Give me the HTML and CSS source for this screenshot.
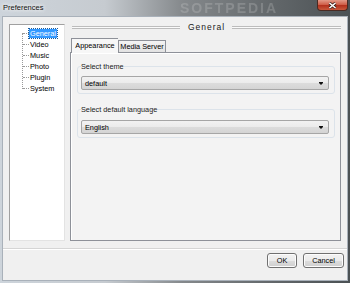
FILE: index.html
```html
<!DOCTYPE html>
<html lang="en">
<head>
    <meta charset="UTF-8">
    <title>Preferences</title>
    <link rel="stylesheet" href="styles.css">
</head>
<body>
    <div class="window">
        <div class="titlebar">
            <span class="title">Preferences</span>
            <span class="watermark">SOFTPEDIA</span>
            <span class="close">
                <svg width="9" height="7" viewBox="0 0 9 7">
                    <path d="M1.5 1 L7.5 6 M7.5 1 L1.5 6" stroke="#3a2018" stroke-width="3" />
                    <path d="M1.5 1 L7.5 6 M7.5 1 L1.5 6" stroke="#fff" stroke-width="1.6" />
                </svg>
            </span>
        </div>
        <div class="client">
            <div class="main">
                <div class="tree">
                    <ul>
                        <li><span class="selected">General</span></li>
                        <li><span>Video</span></li>
                        <li><span>Music</span></li>
                        <li><span>Photo</span></li>
                        <li><span>Plugin</span></li>
                        <li><span>System</span></li>
                    </ul>
                </div>
                <div class="content">
                    <div class="page-header">
                        <span class="rule rule-left"></span>
                        <span class="page-title">General</span>
                        <span class="rule"></span>
                    </div>
                    <div class="tabs">
                        <div class="tab-strip">
                            <span class="tab active">Appearance</span>
                            <span class="tab">Media Server</span>
                        </div>
                        <div class="tab-panel">
                            <fieldset class="group">
                                <legend>Select theme</legend>
                                <div class="combo">
                                    <span>default</span>
                                    <i class="arrow"></i>
                                </div>
                            </fieldset>
                            <fieldset class="group group-lang">
                                <legend>Select default language</legend>
                                <div class="combo">
                                    <span>English</span>
                                    <i class="arrow"></i>
                                </div>
                            </fieldset>
                        </div>
                    </div>
                </div>
            </div>
            <div class="footer">
                <button class="btn btn-ok">OK</button>
                <button class="btn btn-cancel">Cancel</button>
            </div>
        </div>
    </div>
</body>
</html>
```

FILE: styles.css
```css
body {
    margin: 0;
    width: 350px;
    height: 283px;
    overflow: hidden;
    font-family: "Liberation Sans", Arial, sans-serif;
    font-size: 7.3px;
    color: #000;
    background: linear-gradient(90deg, #cdd4db 0%, #c6cbd0 30%, #85898c 52%, #62676a 78%, #4b5154 100%);
}

.window {
    display: flex;
    flex-direction: column;
    height: 283px;
}

.titlebar {
    position: relative;
    height: 16px;
    display: flex;
    justify-content: space-between;
    align-items: flex-start;
    padding-left: 3px;
}

.title {
    font-size: 7.5px;
    line-height: 16px;
    color: #111;
    text-shadow: 0 0 4px #fff, 0 0 4px #fff;
}

/* blurred desktop watermark behind the glass */
.watermark {
    position: absolute;
    left: 180px;
    top: 0;
    font-size: 14px;
    line-height: 16px;
    font-weight: bold;
    letter-spacing: 2px;
    color: rgba(225, 225, 225, 0.22);
    filter: blur(0.7px);
}

.close {
    width: 31px;
    height: 11px;
    margin-right: 2px;
    box-sizing: border-box;
    display: flex;
    justify-content: center;
    align-items: center;
    border: 1px solid #4a2a22;
    border-top: none;
    border-radius: 0 0 4px 4px;
    background: linear-gradient(#e39a88 0%, #d0604a 45%, #b4321e 55%, #c8583c 100%);
}

.client {
    flex: 1;
    margin: 0 2px 2px 2px;
    border: 1px solid #a9b1ba;
    background-color: #f0f0f0;
    display: flex;
    flex-direction: column;
}

.main {
    flex: 1;
    display: flex;
    gap: 5px;
    padding: 7px 6px 0 6px;
}

.tree {
    width: 56px;
    box-sizing: border-box;
    background-color: #fff;
    border: 1px solid;
    border-color: #a0a0a0 #e3e3e3 #e3e3e3 #a0a0a0;
}

.tree ul {
    position: relative;
    list-style: none;
    margin: 3px 0 0 0;
    padding: 0 0 0 19px;
}

.tree ul::before {
    content: "";
    position: absolute;
    left: 12px;
    top: 5px;
    height: 56px;
    border-left: 1px dotted #9a9a9a;
}

.tree li {
    position: relative;
    line-height: 11px;
    height: 11px;
}

.tree li::before {
    content: "";
    position: absolute;
    left: -6px;
    top: 5px;
    width: 6px;
    border-top: 1px dotted #9a9a9a;
}

.tree li span {
    padding: 0 1px;
}

.tree .selected {
    background-color: #3399ff;
    color: #fff;
    outline: 1px dotted #1a5a9a;
}

.content {
    flex: 1;
    display: flex;
    flex-direction: column;
}

.page-header {
    height: 10px;
    margin-top: -2px;
    display: flex;
    align-items: center;
}

.rule {
    flex: 1;
    height: 1px;
    border-top: 1px solid #bcbcbc;
    border-bottom: 1px solid #bcbcbc;
    background-color: #fafafa;
    margin-left: 4px;
}

.rule-left {
    flex: 0 0 108px;
    margin-left: 2px;
}

.page-title {
    font-size: 8.5px;
    letter-spacing: 1px;
    color: #1a1a1a;
    padding: 0 3px 0 8px;
}

.tabs {
    flex: 1;
    display: flex;
    flex-direction: column;
    margin-top: 6px;
}

.tab-strip {
    height: 14px;
    display: flex;
    align-items: flex-end;
    padding-left: 1px;
}

.tab {
    box-sizing: border-box;
    height: 12px;
    line-height: 11px;
    text-align: center;
    border: 1px solid #8e9199;
    border-bottom: none;
    background: linear-gradient(#f4f4f4, #e2e2e2);
}

.tab.active {
    position: relative;
    z-index: 1;
    width: 47px;
    height: 15px;
    margin-bottom: -1px;
    line-height: 13px;
    background: #f7f7f7;
    border-right: none;
}

.tab:not(.active) {
    width: 48px;
}

.tab-panel {
    flex: 1;
    border: 1px solid #8e9199;
    background-color: #f3f3f3;
    box-shadow: inset 1px 1px 0 #fff;
    padding: 9px 5px 0 6px;
}

.group {
    margin: 0;
    padding: 0 5px 3px 3px;
    border: 1px solid #dce3ea;
    border-radius: 3px;
}

.group legend {
    padding: 0;
    line-height: 9px;
    color: #1a1a1a;
}

.group-lang {
    margin-top: 11px;
}

.combo {
    height: 14px;
    box-sizing: border-box;
    margin-top: 5px;
    display: flex;
    align-items: center;
    justify-content: space-between;
    padding: 0 5px 0 3px;
    border: 1px solid #a6a6a6;
    border-radius: 2px;
    background: linear-gradient(#f2f2f2 0%, #ebebeb 50%, #dcdcdc 51%, #d4d4d4 100%);
}

.group-lang .combo {
    margin-top: 6px;
}

.arrow {
    width: 0;
    height: 0;
    margin-top: 1px;
    border-left: 2.5px solid transparent;
    border-right: 2.5px solid transparent;
    border-top: 2.5px solid #111;
    box-shadow: 0 -1px 0 #111;
}

.footer {
    height: 27px;
    margin-top: 7px;
    border-top: 1px solid #d5d5d5;
    box-shadow: inset 0 1px 0 #fff;
    display: flex;
    justify-content: flex-end;
    align-items: flex-start;
    gap: 6px;
    padding: 4px 3px 0 0;
}

.btn {
    height: 15px;
    padding: 0;
    font-family: "Liberation Sans", Arial, sans-serif;
    font-size: 7.3px;
    color: #000;
    border: 1px solid #707070;
    border-radius: 3px;
    background: linear-gradient(#f2f2f2 0%, #ebebeb 50%, #dddddd 51%, #cfcfcf 100%);
    box-shadow: inset 0 0 0 1px #fcfcfc;
}

.btn-ok {
    width: 30px;
}

.btn-cancel {
    width: 41px;
}
```
